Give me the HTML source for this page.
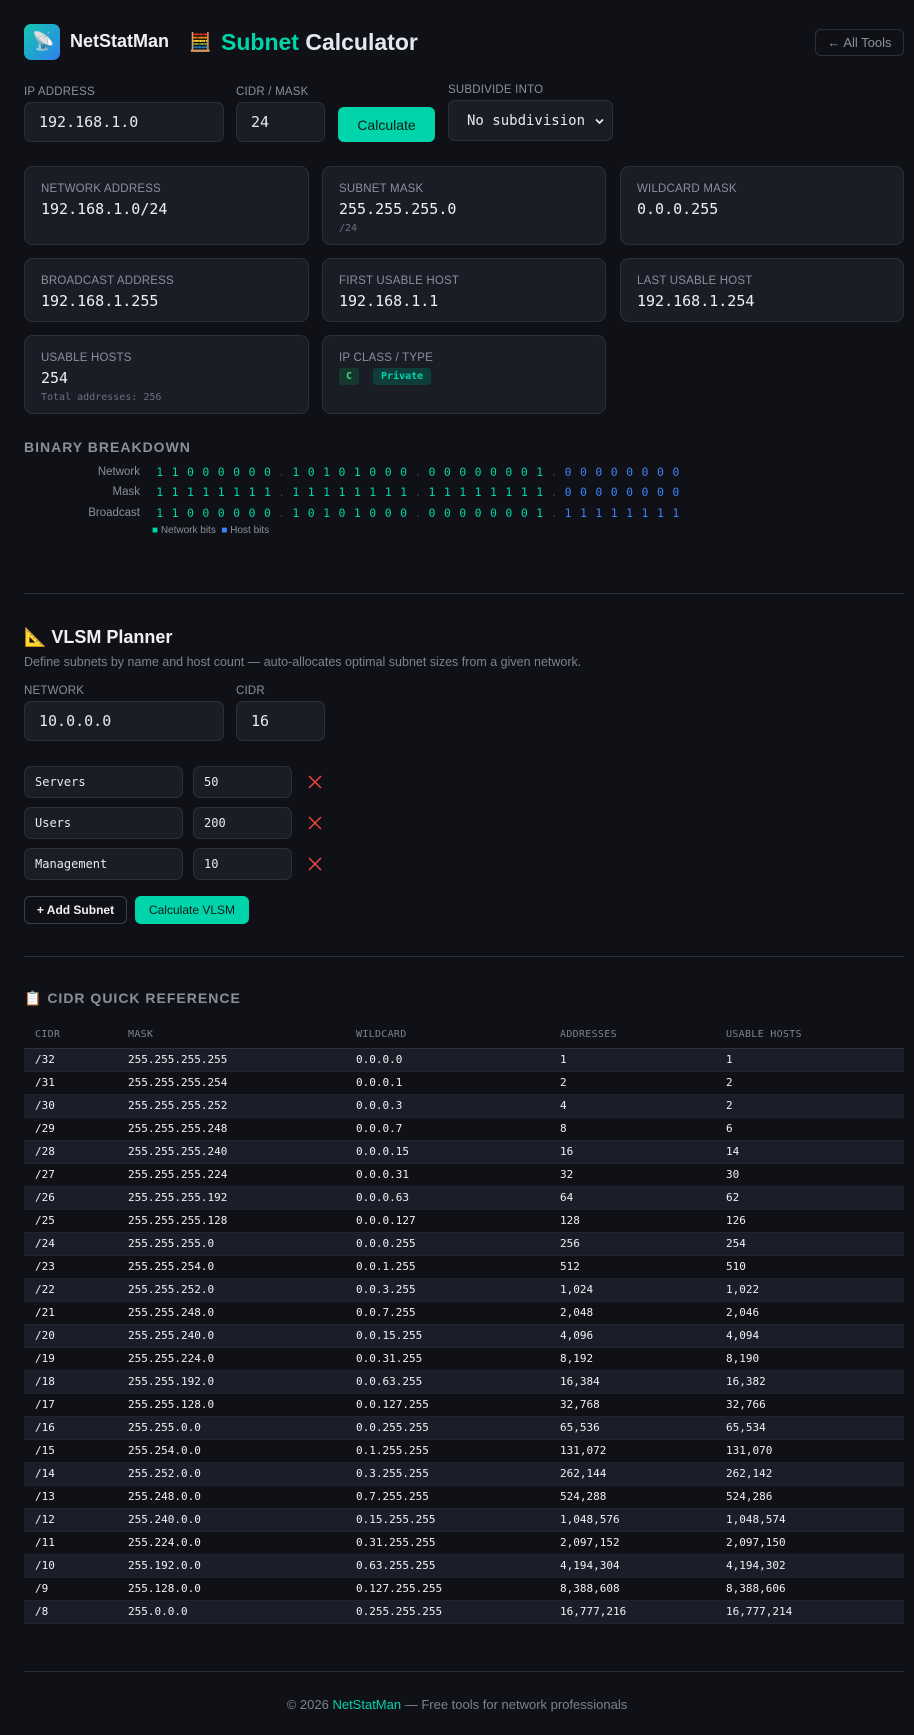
<!DOCTYPE html>
<html><head><meta charset="utf-8">
<style>
*{box-sizing:border-box;margin:0;padding:0}
body{width:914px;height:1735px;background:#101117;color:#e6e8ef;font-family:"Liberation Sans",sans-serif;position:relative;overflow:hidden}
.abs{position:absolute}
.lbl{font-size:11.5px;color:#8b8f9c;letter-spacing:.2px}
.inp{position:absolute;background:#1a1c26;border:1px solid #2c2f3c;border-radius:7px;font-family:"DejaVu Sans Mono",monospace;font-size:15px;color:#e6e8ef;padding-left:14px;display:flex;align-items:center}
.card{position:absolute;background:#1a1c26;border:1px solid #2c2f3c;border-radius:9px;padding:13px 16px}
.card .t{font-size:11.5px;color:#8b8f9c;letter-spacing:.2px;margin-top:3px}
.card .v{font-family:"DejaVu Sans Mono",monospace;font-size:15px;color:#eef0f5;margin-top:5px}
.card .s{font-family:"DejaVu Sans Mono",monospace;font-size:10px;color:#6b6f7c;margin-top:5px}
.btn{position:absolute;background:#00d4aa;color:#0b1a16;border-radius:6px;font-size:13px;display:flex;align-items:center;justify-content:center;font-weight:500}
.brow{position:absolute;left:0;height:20px;font-size:11.5px;display:flex;align-items:center}
.brow .n{width:152px;text-align:right;color:#8b8f9c;font-family:"Liberation Sans",sans-serif;padding-right:12px;font-size:11.5px}
.b{display:inline-block;width:15.4px;text-align:center;font-family:"DejaVu Sans Mono",monospace;font-size:11.5px}
.g{color:#00d4aa}.h{color:#3b82f6}
.d{display:inline-block;width:13px;text-align:center;color:#3a3d4a;font-family:"DejaVu Sans Mono",monospace}
.x{position:absolute;left:308px}
table{position:absolute;left:24px;top:1022px;width:880px;border-collapse:collapse;font-family:"DejaVu Sans Mono",monospace;font-size:11px}
th{text-align:left;color:#7d8190;font-weight:normal;font-size:10px;height:26px;border-bottom:1px solid #2c2f3c;letter-spacing:.3px}
td{height:23px;color:#eef0f5;border-bottom:1px solid #202330}
tr.o td{background:#1b1d28}
th:first-child,td:first-child{padding-left:11px;width:104px}
.hr{position:absolute;left:24px;width:880px;height:1px;background:#2a2d3a}
</style></head><body>

<div class="abs" style="left:24px;top:24px;width:36px;height:36px;border-radius:7px;background:linear-gradient(135deg,#14c8b0,#2f80ed)"></div>
<div class="abs" style="left:32px;top:31px;font-size:18px;">📡</div>
<div class="abs" style="left:70px;top:31px;font-size:18px;font-weight:bold;color:#eef0f5">NetStatMan</div>
<div class="abs" style="left:189px;top:32px;font-size:18px">🧮</div>
<div class="abs" style="left:221px;top:29px;font-size:23px;font-weight:bold"><span style="color:#00d4aa">Subnet</span> Calculator</div>
<div class="abs" style="left:815px;top:29px;width:89px;height:27px;border:1px solid #2c2f3c;border-radius:6px;font-size:13px;color:#8b8f9c;display:flex;align-items:center;justify-content:center">← All Tools</div>

<div class="abs lbl" style="left:24px;top:86px">IP ADDRESS</div>
<div class="abs lbl" style="left:236px;top:86px">CIDR / MASK</div>
<div class="abs lbl" style="left:448px;top:84px">SUBDIVIDE INTO</div>
<div class="inp" style="left:24px;top:102px;width:200px;height:40px">192.168.1.0</div>
<div class="inp" style="left:236px;top:102px;width:89px;height:40px">24</div>
<div class="btn" style="left:338px;top:107px;width:97px;height:35px;font-size:14px">Calculate</div>
<div class="inp" style="left:448px;top:100px;width:165px;height:41px;font-size:14px;padding-left:18px">No subdivision<svg style="position:absolute;right:8px;top:17px" width="9" height="7" viewBox="0 0 9 7"><path d="M1 1.5L4.5 5L8 1.5" stroke="#e6e8ef" stroke-width="1.8" fill="none"/></svg></div>

<div class="card" style="left:24px;top:166px;width:285px;height:79px"><div class="t">NETWORK ADDRESS</div><div class="v">192.168.1.0/24</div></div>
<div class="card" style="left:322px;top:166px;width:284px;height:79px"><div class="t">SUBNET MASK</div><div class="v">255.255.255.0</div><div class="s">/24</div></div>
<div class="card" style="left:620px;top:166px;width:284px;height:79px"><div class="t">WILDCARD MASK</div><div class="v">0.0.0.255</div></div>
<div class="card" style="left:24px;top:258px;width:285px;height:64px"><div class="t">BROADCAST ADDRESS</div><div class="v">192.168.1.255</div></div>
<div class="card" style="left:322px;top:258px;width:284px;height:64px"><div class="t">FIRST USABLE HOST</div><div class="v">192.168.1.1</div></div>
<div class="card" style="left:620px;top:258px;width:284px;height:64px"><div class="t">LAST USABLE HOST</div><div class="v">192.168.1.254</div></div>
<div class="card" style="left:24px;top:335px;width:285px;height:79px"><div class="t">USABLE HOSTS</div><div class="v">254</div><div class="s">Total addresses: 256</div></div>
<div class="card" style="left:322px;top:335px;width:284px;height:79px"><div class="t">IP CLASS / TYPE</div>
<div style="margin-top:7px;font-family:'DejaVu Sans Mono',monospace;font-size:10px;font-weight:bold"><span style="background:#16382e;color:#3ddc84;padding:3px 7px;border-radius:3px">C</span><span style="background:#0f3e3a;color:#00d4aa;padding:3px 8px;border-radius:3px;margin-left:14px">Private</span></div></div>

<div class="abs" style="left:24px;top:439px;font-size:14px;font-weight:bold;color:#8b8f9c;letter-spacing:1px">BINARY BREAKDOWN</div>
<div class="brow" style="top:462px"><span class="n">Network</span><span class="g"><span class="b">1</span><span class="b">1</span><span class="b">0</span><span class="b">0</span><span class="b">0</span><span class="b">0</span><span class="b">0</span><span class="b">0</span></span><span class="d">.</span><span class="g"><span class="b">1</span><span class="b">0</span><span class="b">1</span><span class="b">0</span><span class="b">1</span><span class="b">0</span><span class="b">0</span><span class="b">0</span></span><span class="d">.</span><span class="g"><span class="b">0</span><span class="b">0</span><span class="b">0</span><span class="b">0</span><span class="b">0</span><span class="b">0</span><span class="b">0</span><span class="b">1</span></span><span class="d">.</span><span class="h"><span class="b">0</span><span class="b">0</span><span class="b">0</span><span class="b">0</span><span class="b">0</span><span class="b">0</span><span class="b">0</span><span class="b">0</span></span></div>
<div class="brow" style="top:482px"><span class="n">Mask</span><span class="g"><span class="b">1</span><span class="b">1</span><span class="b">1</span><span class="b">1</span><span class="b">1</span><span class="b">1</span><span class="b">1</span><span class="b">1</span></span><span class="d">.</span><span class="g"><span class="b">1</span><span class="b">1</span><span class="b">1</span><span class="b">1</span><span class="b">1</span><span class="b">1</span><span class="b">1</span><span class="b">1</span></span><span class="d">.</span><span class="g"><span class="b">1</span><span class="b">1</span><span class="b">1</span><span class="b">1</span><span class="b">1</span><span class="b">1</span><span class="b">1</span><span class="b">1</span></span><span class="d">.</span><span class="h"><span class="b">0</span><span class="b">0</span><span class="b">0</span><span class="b">0</span><span class="b">0</span><span class="b">0</span><span class="b">0</span><span class="b">0</span></span></div>
<div class="brow" style="top:503px"><span class="n">Broadcast</span><span class="g"><span class="b">1</span><span class="b">1</span><span class="b">0</span><span class="b">0</span><span class="b">0</span><span class="b">0</span><span class="b">0</span><span class="b">0</span></span><span class="d">.</span><span class="g"><span class="b">1</span><span class="b">0</span><span class="b">1</span><span class="b">0</span><span class="b">1</span><span class="b">0</span><span class="b">0</span><span class="b">0</span></span><span class="d">.</span><span class="g"><span class="b">0</span><span class="b">0</span><span class="b">0</span><span class="b">0</span><span class="b">0</span><span class="b">0</span><span class="b">0</span><span class="b">1</span></span><span class="d">.</span><span class="h"><span class="b">1</span><span class="b">1</span><span class="b">1</span><span class="b">1</span><span class="b">1</span><span class="b">1</span><span class="b">1</span><span class="b">1</span></span></div>
<div class="abs" style="left:152px;top:525px;font-size:10px;color:#8b8f9c"><span style="color:#00d4aa">■</span> Network bits &nbsp;<span style="color:#3b82f6">■</span> Host bits</div>

<div class="hr" style="top:593px"></div>

<div class="abs" style="left:24px;top:627px;font-size:18px;font-weight:bold;color:#eef0f5">📐 VLSM Planner</div>
<div class="abs" style="left:24px;top:655px;font-size:12.5px;color:#7d8190">Define subnets by name and host count — auto-allocates optimal subnet sizes from a given network.</div>
<div class="abs lbl" style="left:24px;top:685px">NETWORK</div>
<div class="abs lbl" style="left:236px;top:685px">CIDR</div>
<div class="inp" style="left:24px;top:701px;width:200px;height:40px">10.0.0.0</div>
<div class="inp" style="left:236px;top:701px;width:89px;height:40px">16</div>

<div class="inp" style="left:24px;top:766px;width:159px;height:32px;font-size:12px;padding-left:10px">Servers</div>
<div class="inp" style="left:193px;top:766px;width:99px;height:32px;font-size:12px;padding-left:10px">50</div>
<svg class="x" style="top:775px" width="14" height="14"><path d="M1 1L13 13M13 1L1 13" stroke="#ef4444" stroke-width="1.5"/></svg>
<div class="inp" style="left:24px;top:807px;width:159px;height:32px;font-size:12px;padding-left:10px">Users</div>
<div class="inp" style="left:193px;top:807px;width:99px;height:32px;font-size:12px;padding-left:10px">200</div>
<svg class="x" style="top:816px" width="14" height="14"><path d="M1 1L13 13M13 1L1 13" stroke="#ef4444" stroke-width="1.5"/></svg>
<div class="inp" style="left:24px;top:848px;width:159px;height:32px;font-size:12px;padding-left:10px">Management</div>
<div class="inp" style="left:193px;top:848px;width:99px;height:32px;font-size:12px;padding-left:10px">10</div>
<svg class="x" style="top:857px" width="14" height="14"><path d="M1 1L13 13M13 1L1 13" stroke="#ef4444" stroke-width="1.5"/></svg>

<div class="abs" style="left:24px;top:896px;width:103px;height:28px;border:1px solid #3a3d4a;border-radius:6px;font-size:12px;font-weight:bold;color:#eef0f5;display:flex;align-items:center;justify-content:center">+ Add Subnet</div>
<div class="btn" style="left:135px;top:896px;width:114px;height:28px;font-size:12px">Calculate VLSM</div>

<div class="hr" style="top:956px"></div>

<div class="abs" style="left:24px;top:990px;font-size:14px;font-weight:bold;color:#8b8f9c;letter-spacing:1px">📋 CIDR QUICK REFERENCE</div>
<table>
<tr><th>CIDR</th><th style="width:228px">MASK</th><th style="width:204px">WILDCARD</th><th style="width:166px">ADDRESSES</th><th>USABLE HOSTS</th></tr>
<tr class="o"><td>/32</td><td>255.255.255.255</td><td>0.0.0.0</td><td>1</td><td>1</td></tr>
<tr><td>/31</td><td>255.255.255.254</td><td>0.0.0.1</td><td>2</td><td>2</td></tr>
<tr class="o"><td>/30</td><td>255.255.255.252</td><td>0.0.0.3</td><td>4</td><td>2</td></tr>
<tr><td>/29</td><td>255.255.255.248</td><td>0.0.0.7</td><td>8</td><td>6</td></tr>
<tr class="o"><td>/28</td><td>255.255.255.240</td><td>0.0.0.15</td><td>16</td><td>14</td></tr>
<tr><td>/27</td><td>255.255.255.224</td><td>0.0.0.31</td><td>32</td><td>30</td></tr>
<tr class="o"><td>/26</td><td>255.255.255.192</td><td>0.0.0.63</td><td>64</td><td>62</td></tr>
<tr><td>/25</td><td>255.255.255.128</td><td>0.0.0.127</td><td>128</td><td>126</td></tr>
<tr class="o"><td>/24</td><td>255.255.255.0</td><td>0.0.0.255</td><td>256</td><td>254</td></tr>
<tr><td>/23</td><td>255.255.254.0</td><td>0.0.1.255</td><td>512</td><td>510</td></tr>
<tr class="o"><td>/22</td><td>255.255.252.0</td><td>0.0.3.255</td><td>1,024</td><td>1,022</td></tr>
<tr><td>/21</td><td>255.255.248.0</td><td>0.0.7.255</td><td>2,048</td><td>2,046</td></tr>
<tr class="o"><td>/20</td><td>255.255.240.0</td><td>0.0.15.255</td><td>4,096</td><td>4,094</td></tr>
<tr><td>/19</td><td>255.255.224.0</td><td>0.0.31.255</td><td>8,192</td><td>8,190</td></tr>
<tr class="o"><td>/18</td><td>255.255.192.0</td><td>0.0.63.255</td><td>16,384</td><td>16,382</td></tr>
<tr><td>/17</td><td>255.255.128.0</td><td>0.0.127.255</td><td>32,768</td><td>32,766</td></tr>
<tr class="o"><td>/16</td><td>255.255.0.0</td><td>0.0.255.255</td><td>65,536</td><td>65,534</td></tr>
<tr><td>/15</td><td>255.254.0.0</td><td>0.1.255.255</td><td>131,072</td><td>131,070</td></tr>
<tr class="o"><td>/14</td><td>255.252.0.0</td><td>0.3.255.255</td><td>262,144</td><td>262,142</td></tr>
<tr><td>/13</td><td>255.248.0.0</td><td>0.7.255.255</td><td>524,288</td><td>524,286</td></tr>
<tr class="o"><td>/12</td><td>255.240.0.0</td><td>0.15.255.255</td><td>1,048,576</td><td>1,048,574</td></tr>
<tr><td>/11</td><td>255.224.0.0</td><td>0.31.255.255</td><td>2,097,152</td><td>2,097,150</td></tr>
<tr class="o"><td>/10</td><td>255.192.0.0</td><td>0.63.255.255</td><td>4,194,304</td><td>4,194,302</td></tr>
<tr><td>/9</td><td>255.128.0.0</td><td>0.127.255.255</td><td>8,388,608</td><td>8,388,606</td></tr>
<tr class="o"><td>/8</td><td>255.0.0.0</td><td>0.255.255.255</td><td>16,777,216</td><td>16,777,214</td></tr>
</table>

<div class="hr" style="top:1671px"></div>
<div class="abs" style="left:0;width:914px;top:1697px;text-align:center;font-size:13px;color:#7d8190">© 2026 <span style="color:#00d4aa">NetStatMan</span> — Free tools for network professionals</div>
</body></html>
